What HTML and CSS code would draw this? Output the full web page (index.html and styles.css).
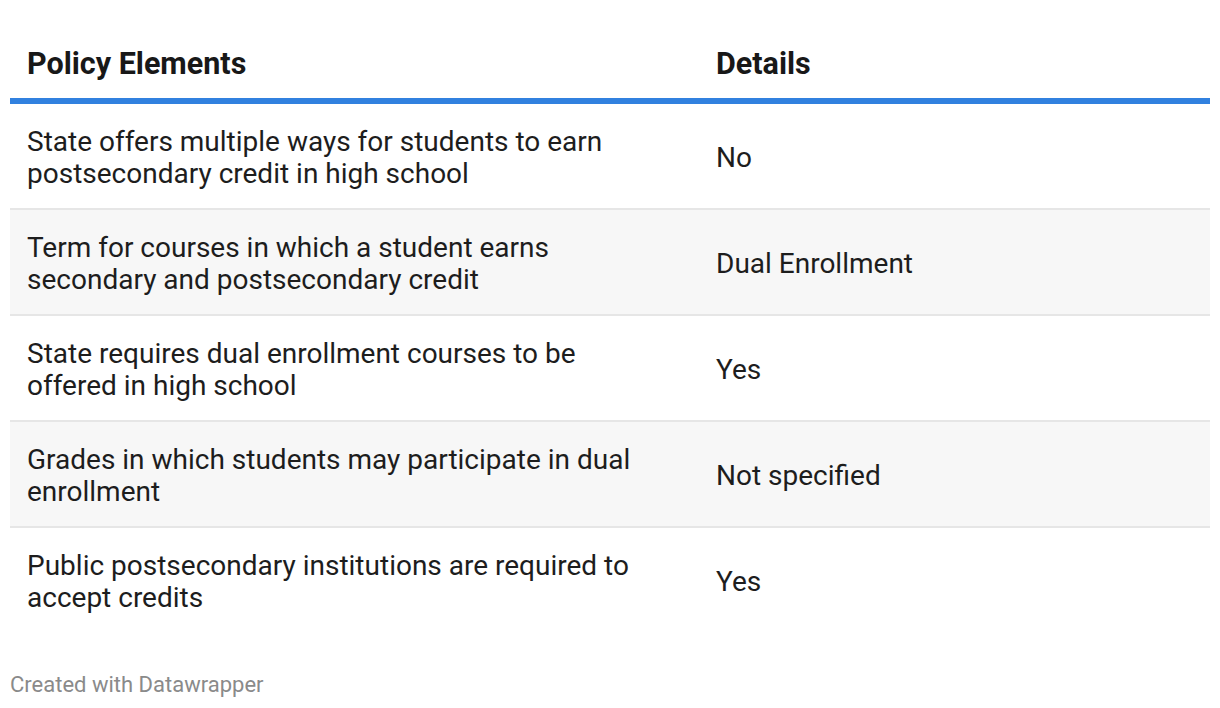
FILE: index.html
```html
<!DOCTYPE html>
<html>
<head>
<meta charset="utf-8">
<link rel="stylesheet" href="styles.css">
</head>
<body>
<div class="chart">
  <table class="tbl">
    <thead>
      <tr>
        <th class="c1">Policy Elements</th>
        <th class="c2">Details</th>
      </tr>
    </thead>
    <tbody>
      <tr>
        <td class="c1">State offers multiple ways for students to earn postsecondary credit in high school</td>
        <td class="c2">No</td>
      </tr>
      <tr class="alt">
        <td class="c1">Term for courses in which a student earns secondary and postsecondary credit</td>
        <td class="c2">Dual Enrollment</td>
      </tr>
      <tr>
        <td class="c1">State requires dual enrollment courses to be offered in high school</td>
        <td class="c2">Yes</td>
      </tr>
      <tr class="alt">
        <td class="c1">Grades in which students may participate in dual enrollment</td>
        <td class="c2">Not specified</td>
      </tr>
      <tr class="last">
        <td class="c1">Public postsecondary institutions are required to accept credits</td>
        <td class="c2">Yes</td>
      </tr>
    </tbody>
  </table>
  <div class="footer">Created with Datawrapper</div>
</div>
</body>
</html>
```
FILE: styles.css
```css
html, body {
  margin: 0;
  padding: 0;
  background: #ffffff;
}
body {
  font-family: Roboto, "Liberation Sans", sans-serif;
  color: #1d1d1d;
}
.chart {
  padding: 0 10px;
}
.tbl {
  width: 100%;
  border-collapse: collapse;
  table-layout: fixed;
  margin-top: 40px;
}
.tbl th {
  font-size: 30.5px;
  font-weight: 700;
  text-align: left;
  line-height: 32px;
  padding: 8px 17px 18px 17px;
  border-bottom: 6px solid #3181df;
  color: #181818;
}
.tbl td {
  font-size: 28px;
  line-height: 32px;
  padding: 22px 17px 18px 17px;
  border-bottom: 2px solid #e6e6e6;
  vertical-align: middle;
}
.tbl .c1 {
  width: 689px;
  box-sizing: border-box;
  padding-right: 50px;
}
.tbl tr.alt td {
  background: #f7f7f7;
}
.tbl tr.last td {
  border-bottom: none;
}
.footer {
  margin-top: 40px;
  font-size: 22px;
  color: #8a8a8a;
}
```
